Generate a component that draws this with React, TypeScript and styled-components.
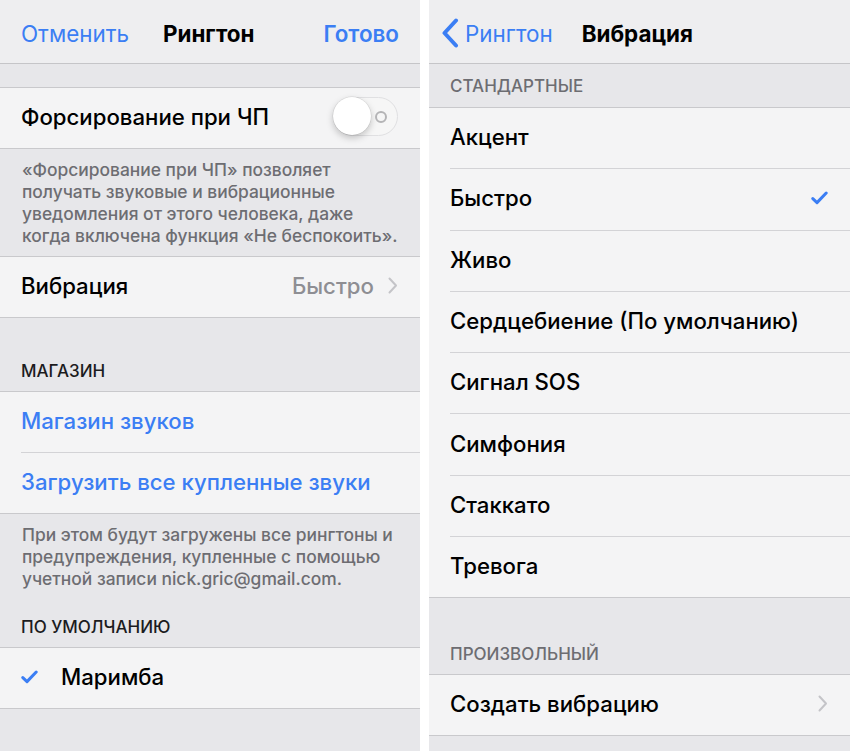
import React from "react";
import styled, { createGlobalStyle } from "styled-components";

const Global = createGlobalStyle`
  html, body { margin: 0; padding: 0; background: #ffffff; }
  body { font-family: Inter, "Noto Sans", sans-serif; -webkit-font-smoothing: antialiased; }
`;

const BLUE = "#3b7ef4";

const Page = styled.div`
  display: flex;
  gap: 9px;
  width: 850px;
  height: 751px;
  overflow: hidden;
  background: #fff;
`;

const Screen = styled.div<{ $w: number }>`
  width: ${(p) => p.$w}px;
  flex: none;
  height: 751px;
  background: #e7e7ea;
  display: flex;
  flex-direction: column;
`;

const Nav = styled.div<{ $pl: number }>`
  height: 64px;
  flex: none;
  background: #eeeef0;
  border-bottom: 1px solid #c5c5c8;
  display: flex;
  align-items: center;
  padding: 3px 21px 0 ${(p) => p.$pl}px;
  box-sizing: border-box;
  font-size: 22.4px;
`;

const NavLink = styled.span<{ $bold?: boolean }>`
  color: ${BLUE};
  font-weight: ${(p) => (p.$bold ? 600 : 400)};
  display: flex;
  align-items: center;
`;

const NavTitle = styled.span<{ $ml?: number }>`
  color: #000;
  font-weight: 700;
  margin-left: ${(p) => p.$ml ?? 0}px;
`;

const Spacer = styled.div<{ $h: number }>`
  height: ${(p) => p.$h}px;
  flex: none;
`;

const Group = styled.div`
  background: #f4f4f5;
  border-top: 1px solid #c9c9cc;
  border-bottom: 1px solid #c9c9cc;
  flex: none;
`;

const Row = styled.div<{ $last?: boolean; $h?: number }>`
  height: ${(p) => (p.$h ?? 60) - 3}px;
  padding-bottom: 3px;
  display: flex;
  align-items: center;
  margin-left: 21px;
  padding-right: 22px;
  border-bottom: ${(p) => (p.$last ? "none" : "1px solid #d3d3d6")};
  font-size: 22.2px;
  font-weight: 500;
  color: #000;
`;

const Label = styled.span<{ $blue?: boolean }>`
  flex: 1;
  color: ${(p) => (p.$blue ? BLUE : "#000")};
`;

const Value = styled.span`
  color: #8e8e93;
  margin-right: 14px;
`;

const Footer = styled.div<{ $pt: number; $pb: number }>`
  padding: ${(p) => p.$pt}px 21px ${(p) => p.$pb}px 22px;
  font-size: 17.4px;
  font-weight: 500;
  line-height: 22px;
  color: #6d6d72;
  flex: none;
`;

const Header = styled.div<{ $h: number; $pb: number; $dark?: boolean }>`
  height: ${(p) => p.$h}px;
  box-sizing: border-box;
  padding: 0 21px ${(p) => p.$pb}px 21px;
  display: flex;
  align-items: flex-end;
  font-size: 17px;
  font-weight: 500;
  line-height: 20px;
  color: ${(p) => (p.$dark ? "#1c1c1e" : "#6d6d72")};
  flex: none;
`;

const Toggle = styled.div`
  position: relative;
  width: 65px;
  height: 39px;
  border-radius: 20px;
  border: 1.5px solid #e0e0e2;
  background: #f6f6f6;
  box-sizing: border-box;
`;

const Knob = styled.div`
  position: absolute;
  left: -1px;
  top: -1px;
  width: 38px;
  height: 38px;
  border-radius: 50%;
  background: #fff;
  box-shadow: 0 3px 7px rgba(0, 0, 0, 0.22), 0 0 0 0.5px rgba(0, 0, 0, 0.1);
`;

const Ring = styled.div`
  position: absolute;
  right: 10px;
  top: 12.5px;
  width: 8px;
  height: 8px;
  border-radius: 50%;
  border: 2px solid #b4b4b6;
`;

const Chevron = ({ color = "#c4c4c8" }: { color?: string }) => (
  <svg width="10" height="17" viewBox="0 0 10 17">
    <path d="M1.5 1.5 L8 8.5 L1.5 15.5" fill="none" stroke={color} strokeWidth="2" strokeLinecap="round" strokeLinejoin="round" />
  </svg>
);

const Check = () => (
  <svg width="17" height="14" viewBox="0 0 17 14">
    <path d="M1.8 7.6 L6 11.6 L15.2 2" fill="none" stroke={BLUE} strokeWidth="3" strokeLinecap="round" strokeLinejoin="round" />
  </svg>
);

const CheckSlot = styled.span`
  width: 40px;
  display: flex;
  align-items: center;
  flex: none;
`;

const BackIcon = () => (
  <svg width="18" height="30" viewBox="0 0 18 30" style={{ marginRight: 6 }}>
    <path d="M15 2.5 L3.5 15 L15 27.5" fill="none" stroke={BLUE} strokeWidth="4" strokeLinecap="round" strokeLinejoin="round" />
  </svg>
);

const vibrations = [
  "Акцент",
  "Быстро",
  "Живо",
  "Сердцебиение (По умолчанию)",
  "Сигнал SOS",
  "Симфония",
  "Стаккато",
  "Тревога",
];

export default function App() {
  return (
    <>
      <Global />
      <Page>
        <Screen $w={420}>
          <Nav $pl={21}>
            <NavLink>Отменить</NavLink>
            <NavTitle $ml={34}>Рингтон</NavTitle>
            <span style={{ flex: 1 }} />
            <NavLink $bold>Готово</NavLink>
          </Nav>
          <Spacer $h={23} />
          <Group>
            <Row $last>
              <Label>Форсирование при ЧП</Label>
              <Toggle>
                <Knob />
                <Ring />
              </Toggle>
            </Row>
          </Group>
          <Footer $pt={10} $pb={9}>
            «Форсирование при ЧП» позволяет получать звуковые и вибрационные уведомления от этого человека, даже когда включена функция «Не беспокоить».
          </Footer>
          <Group>
            <Row $last>
              <Label>Вибрация</Label>
              <Value>Быстро</Value>
              <Chevron />
            </Row>
          </Group>
          <Header $h={73} $pb={10} $dark>МАГАЗИН</Header>
          <Group>
            <Row>
              <Label $blue>Магазин звуков</Label>
            </Row>
            <Row $last>
              <Label $blue>Загрузить все купленные звуки</Label>
            </Row>
          </Group>
          <Footer $pt={10} $pb={10}>
            При этом будут загружены все рингтоны и предупреждения, купленные с помощью учетной записи nick.gric@gmail.com.
          </Footer>
          <Header $h={47} $pb={10} $dark>ПО УМОЛЧАНИЮ</Header>
          <Group>
            <Row $last>
              <CheckSlot>
                <Check />
              </CheckSlot>
              <Label>Маримба</Label>
            </Row>
          </Group>
        </Screen>
        <Screen $w={421}>
          <Nav $pl={12}>
            <NavLink>
              <BackIcon />
              Рингтон
            </NavLink>
            <NavTitle $ml={29}>Вибрация</NavTitle>
          </Nav>
          <Header $h={43} $pb={11}>СТАНДАРТНЫЕ</Header>
          <Group>
            {vibrations.map((v, i) => (
              <Row key={v} $h={60.3} $last={i === vibrations.length - 1}>
                <Label>{v}</Label>
                {v === "Быстро" && <Check />}
              </Row>
            ))}
          </Group>
          <Header $h={76} $pb={10}>ПРОИЗВОЛЬНЫЙ</Header>
          <Group>
            <Row $last>
              <Label>Создать вибрацию</Label>
              <Chevron />
            </Row>
          </Group>
        </Screen>
      </Page>
    </>
  );
}
